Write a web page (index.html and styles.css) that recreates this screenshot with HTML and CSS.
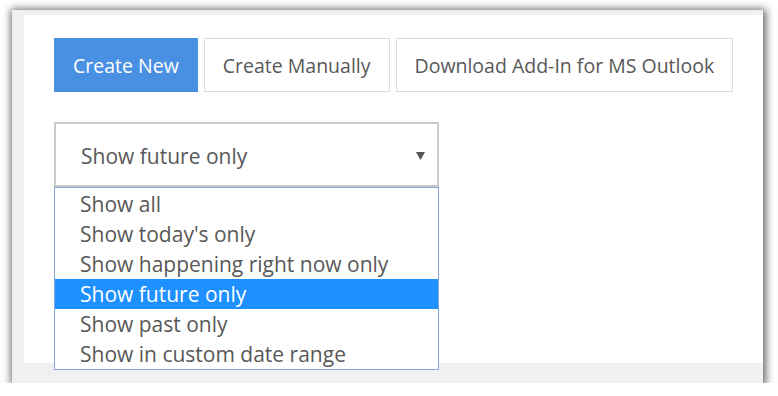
FILE: index.html
```html
<!DOCTYPE html>
<html lang="en">
<head>
  <meta charset="UTF-8" />
  <title>Events</title>
  <link rel="stylesheet" href="styles.css">
</head>
<body>
  <div class="frame">
    <div class="panel">
      <div class="actions">
        <button class="btn btn-primary">Create New</button>
        <button class="btn">Create Manually</button>
        <button class="btn">Download Add-In for MS Outlook</button>
      </div>

      <div class="filter">
        <div class="select">
          <span>Show future only</span>
          <svg class="arrow" width="9" height="8" viewBox="0 0 9 8"><path d="M0 0h9L4.5 8z" fill="#555"/></svg>
        </div>
        <ul class="options">
          <li>Show all</li>
          <li>Show today's only</li>
          <li>Show happening right now only</li>
          <li class="selected">Show future only</li>
          <li>Show past only</li>
          <li>Show in custom date range</li>
        </ul>
      </div>
    </div>
  </div>
</body>
</html>
```

FILE: styles.css
```css
body {
  margin: 0;
  background-color: white;
  font-family: "Open Sans", Arial, sans-serif;
  color: #585858;
}

.frame {
  margin: 10px 0 0 12px;
  width: 751px;
  height: 373px;
  box-sizing: border-box;
  padding: 5px 0 20px 12px;
  background-color: #f0f0f0;
  box-shadow: 1px 1px 8px 2px rgba(0, 0, 0, 0.6);
}

.panel {
  height: 100%;
  box-sizing: border-box;
  background-color: white;
  padding: 23px 0 0 30px;
}

.actions {
  display: flex;
  gap: 6px;
}

.btn {
  height: 54px;
  padding: 0 18px;
  font-family: inherit;
  font-size: 19.5px;
  color: #585858;
  background-color: white;
  border: 1px solid #dcdcdc;
}

.btn-primary {
  background-color: #4a90e2;
  border-color: #4a90e2;
  color: white;
}

.filter {
  position: relative;
  width: 385px;
  margin-top: 30px;
}

.select {
  height: 65px;
  box-sizing: border-box;
  border: 2px solid #cacaca;
  padding: 2px 12px 0 25px;
  display: flex;
  align-items: center;
  justify-content: space-between;
  font-size: 21px;
}

.options {
  position: absolute;
  top: 100%;
  left: 0;
  width: 100%;
  box-sizing: border-box;
  margin: 0;
  padding: 1px 0 0;
  list-style: none;
  background-color: white;
  border: 1px solid #84a6e0;
}

.options li {
  height: 30px;
  line-height: 30px;
  padding-left: 25px;
  font-size: 21px;
}

.options li.selected {
  background-color: #1e90ff;
  color: white;
}
```
